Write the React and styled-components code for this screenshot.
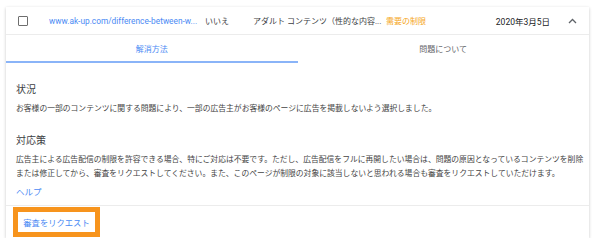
import styled, { createGlobalStyle } from "styled-components";

const Global = createGlobalStyle`
  body {
    margin: 0;
    background: #fff;
    font-family: Roboto, "Noto Sans CJK JP", sans-serif;
  }
`;

const Card = styled.div`
  margin: 7px 0 0 6px;
  width: 583px;
  height: 231px;
  background: #fff;
  box-shadow: 0 1px 3px rgba(0, 0, 0, 0.22);
  display: flex;
  flex-direction: column;
`;

const HeaderRow = styled.div`
  height: 27px;
  display: flex;
  align-items: center;
  border-bottom: 1px solid #ececec;
  padding: 0 12px;
  font-size: 8px;
  color: #3c4043;
`;

const Checkbox = styled.div`
  width: 8px;
  height: 8px;
  border: 1.5px solid #6e6e6e;
  border-radius: 1px;
  flex: none;
`;

const Cell = styled.div`
  width: ${(p) => p.w}px;
  flex: none;
  margin-left: ${(p) => p.ml || 0}px;
  font-size: ${(p) => p.size || 8}px;
  white-space: nowrap;
  overflow: hidden;
  color: ${(p) => p.color || "#3c4043"};
`;

const Spacer = styled.div`
  flex: 1;
`;

const DateText = styled.div`
  font-size: 8.5px;
  color: #202124;
  margin-right: 18px;
`;

const Tabs = styled.div`
  display: flex;
  height: 28px;
`;

const Tab = styled.div`
  flex: 1;
  display: flex;
  align-items: center;
  justify-content: center;
  font-size: 8px;
  color: ${(p) => (p.active ? "#4a8af4" : "#5f6368")};
  border-bottom: 2px solid ${(p) => (p.active ? "#8ab4f8" : "transparent")};
`;

const Content = styled.div`
  padding: 20px 2px 0 10px;
  flex: 1;
`;

const Heading = styled.div`
  font-size: 10px;
  line-height: 14px;
  color: #3c4043;
  margin-top: ${(p) => p.mt || 0}px;
`;

const Para = styled.p`
  margin: 5px 0 0;
  font-size: 7.8px;
  line-height: 14px;
  color: #444;
`;

const Link = styled.a`
  display: block;
  margin-top: 4px;
  font-size: 8.5px;
  line-height: 14px;
  color: #4a8af4;
  text-decoration: none;
`;

const Footer = styled.div`
  border-top: 1px solid #ececec;
  padding: 1px 0 1px 7px;
`;

const RequestButton = styled.button`
  width: 87px;
  height: 30px;
  border: 5px solid #f7941d;
  background: #fff;
  color: #4a8af4;
  font-family: inherit;
  font-size: 8.3px;
  padding: 0;
  display: flex;
  align-items: center;
  justify-content: center;
`;

const Chevron = () => (
  <svg width="9" height="6" viewBox="0 0 9 6">
    <path d="M1 5 L4.5 1.5 L8 5" fill="none" stroke="#5f6368" strokeWidth="1.3" />
  </svg>
);

function App() {
  return (
    <>
      <Global />
      <Card>
        <HeaderRow>
          <Checkbox />
          <Cell w={155} ml={21} size={8.3} color="#4a8af4">
            www.ak-up.com/difference-between-w...
          </Cell>
          <Cell w={48} ml={1}>
            いいえ
          </Cell>
          <Cell w={133}>アダルト コンテンツ（性的な内容...</Cell>
          <Cell w={60} color="#f5a623">
            需要の制限
          </Cell>
          <Spacer />
          <DateText>2020年3月5日</DateText>
          <Chevron />
        </HeaderRow>
        <Tabs>
          <Tab active>解消方法</Tab>
          <Tab>問題について</Tab>
        </Tabs>
        <Content>
          <Heading>状況</Heading>
          <Para>
            お客様の一部のコンテンツに関する問題により、一部の広告主がお客様のページに広告を掲載しないよう選択しました。
          </Para>
          <Heading mt={18}>対応策</Heading>
          <Para>
            広告主による広告配信の制限を許容できる場合、特にご対応は不要です。ただし、広告配信をフルに再開したい場合は、問題の原因となっているコンテンツを削除または修正してから、審査をリクエストしてください。また、このページが制限の対象に該当しないと思われる場合も審査をリクエストしていただけます。
          </Para>
          <Link href="#">ヘルプ</Link>
        </Content>
        <Footer>
          <RequestButton>審査をリクエスト</RequestButton>
        </Footer>
      </Card>
    </>
  );
}

export default App;
